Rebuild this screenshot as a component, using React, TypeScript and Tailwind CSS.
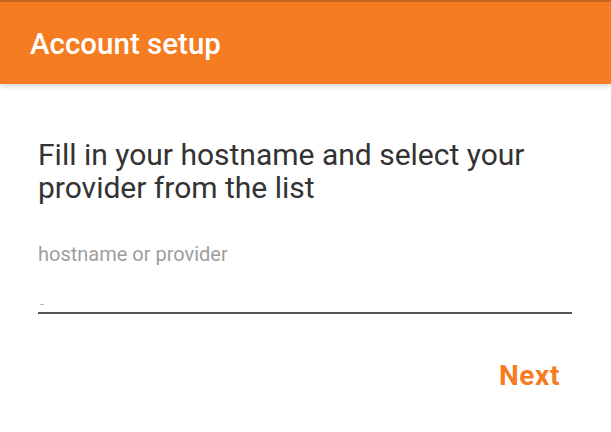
import React from "react";

export default function App() {
  return (
    <div className="w-[611px] h-[432px] bg-white overflow-hidden font-['Roboto',sans-serif]">
      {/* Toolbar */}
      <div className="relative h-[84px] bg-[#f57c20] border-t-2 border-[#c7661c] px-[30px] pt-[28px] shadow-[0_2px_6px_rgba(0,0,0,0.18)]">
        <h1 className="text-white text-[29.5px] font-medium leading-none">Account setup</h1>
      </div>

      <div className="px-[38px] pt-[54px]">
        <p className="text-[#333333] text-[30px] leading-[33px]">
          Fill in your hostname and select your provider from the list
        </p>

        <div className="mt-[38px]">
          <label className="block text-[#9e9e9e] text-[20px] leading-[24px]">hostname or provider</label>
          <div className="mt-[34px] h-[12px] relative">
            <span className="absolute left-[2px] top-[4px] w-[4px] h-px bg-[#bbbbbb]" />
          </div>
          <div className="h-[2px] bg-[#555555] mr-[1px]" />
        </div>

        <div className="flex justify-end pr-[13px] mt-[48px]">
          <button className="text-[#f57c20] text-[28px] font-bold leading-none tracking-[0.6px]">Next</button>
        </div>
      </div>
    </div>
  );
}
